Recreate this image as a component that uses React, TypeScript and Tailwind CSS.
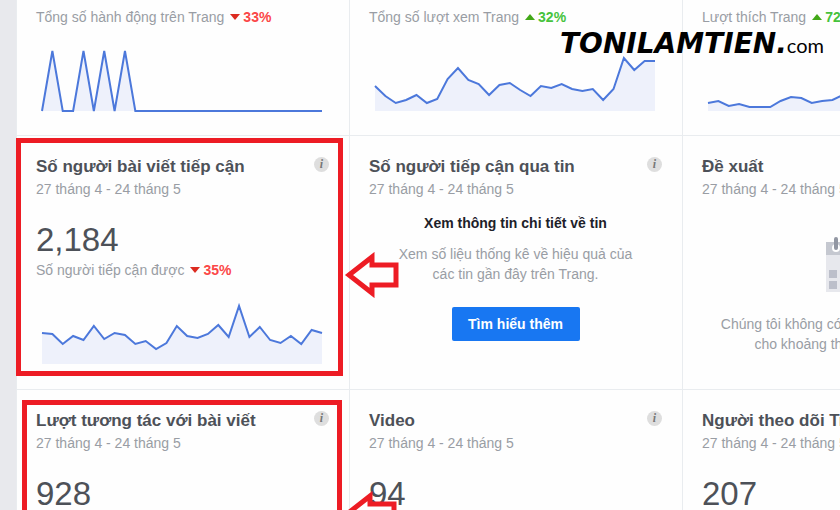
import type { ReactNode } from "react"

const PERIOD = "27 tháng 4 - 24 tháng 5"

const actions = [0, 60, 0, 0, 60, 0, 60, 0, 60, 0, 0, 0, 0, 0, 0, 0, 0, 0, 0, 0, 0, 0, 0, 0, 0, 0, 0, 0]
const views = [25, 15, 8, 11, 16, 8, 12, 32, 43, 31, 27, 16, 26, 28, 21, 15, 25, 23, 27, 22, 20, 22, 11, 22, 53, 41, 50, 50]
const likes = [8, 10, 5, 7, 4, 4, 4, 10, 14, 13, 8, 10, 11, 16, 12, 9, 14, 18, 12, 10, 15, 20, 14, 11, 9, 13, 17, 12]
const reach = [31, 30, 20, 28, 24, 38, 25, 31, 29, 20, 23, 15, 21, 38, 28, 26, 30, 39, 27, 58, 27, 37, 24, 21, 28, 20, 34, 31]

function Sparkline({ data }: { data: number[] }) {
  const step = 280 / (data.length - 1)
  const points = data.map((value, i) => `${i * step},${62 - value}`).join(" ")

  return (
    <svg
      viewBox="0 0 280 62"
      preserveAspectRatio="none"
      className="mt-[22px] block h-[62px] w-full overflow-visible pr-[7px] pl-[6px]"
      aria-hidden="true"
    >
      <polygon points={`0,62 ${points} 280,62`} fill="#eef1fb" />
      <polyline points={points} fill="none" stroke="#4c78db" strokeWidth="2" vectorEffect="non-scaling-stroke" />
    </svg>
  )
}

function Trend({ label, value, up }: { label: string; value: string; up?: boolean }) {
  return (
    <p className="flex items-center text-sm leading-5 whitespace-nowrap text-[#999da4]">
      {label}
      <svg viewBox="0 0 10 6" className={up ? "mr-[3px] ml-[6px] h-[6px] w-[10px] text-[#42a818]" : "mr-[3px] ml-[6px] h-[6px] w-[10px] text-[#dc2b20]"} aria-hidden="true">
        <path d={up ? "M5 0 10 6H0Z" : "M0 0h10L5 6Z"} fill="currentColor" />
      </svg>
      <strong className={up ? "font-bold text-[#46c33c]" : "font-bold text-[#fb4747]"}>{value}</strong>
    </p>
  )
}

function Card({ title, children }: { title?: string; children?: ReactNode }) {
  return (
    <section className="relative border-b border-l border-[#e9ecef] pr-5 pl-[19px]">
      {title && (
        <header className="flex items-start justify-between pt-[19px]">
          <div className="whitespace-nowrap">
            <h2 className="text-[17px] leading-6 font-bold text-[#4d5158]">{title}</h2>
            <p className="text-sm leading-5 text-[#999da4]">{PERIOD}</p>
          </div>
          <button
            type="button"
            aria-label={`Thông tin: ${title}`}
            className="mt-[2px] size-[15px] shrink-0 rounded-full bg-[#dedede] text-center font-['Liberation_Serif',serif] text-xs leading-[15px] font-bold text-[#777777] italic"
          >
            i
          </button>
        </header>
      )}
      {children}
    </section>
  )
}

function Total({ children }: { children: ReactNode }) {
  return <p className="mt-[21px] text-[33px] leading-10 text-[#4d5158]">{children}</p>
}

function Arrow({ className }: { className: string }) {
  return (
    <svg viewBox="0 0 56 46" className={className} aria-hidden="true">
      <path d="M5 23 28 5v8h24v20H28v8Z" fill="none" stroke="#ed1c24" strokeWidth="5" />
    </svg>
  )
}

function CalendarIcon() {
  return (
    <svg viewBox="0 0 46 56" className="h-14 w-[46px]" aria-hidden="true">
      <path d="M0 5h46v13H0z" fill="#c5c8d0" />
      <path d="M0 18h46v37H0z" fill="#e7e8ed" />
      <g fill="#fff">
        <circle cx="10" cy="11" r="4" />
        <circle cx="36" cy="11" r="4" />
      </g>
      <path d="M10 2v9M36 2v9" stroke="#9297a3" strokeWidth="4" strokeLinecap="round" />
      <path
        d="M14 22h8v8h-8zM25 22h8v8h-8zM36 22h7v8h-7zM3 33h8v8H3zM14 33h8v8h-8zM25 33h8v8h-8zM36 33h7v8h-7zM3 44h8v8H3zM14 44h8v8h-8zM25 44h8v8h-8z"
        fill="#bcbfca"
      />
    </svg>
  )
}

export default function App() {
  return (
    <main className="relative h-screen overflow-hidden bg-[#e8e9ed] pl-4 font-['Liberation_Sans',Arial,sans-serif]">
      <div className="grid min-h-full grid-cols-[repeat(3,minmax(333px,1fr))] grid-rows-[136px_254px_254px] bg-[#fefefe]">
        <Card>
          <div className="pt-[7px]">
            <Trend label="Tổng số hành động trên Trang" value="33%" />
            <Sparkline data={actions} />
          </div>
        </Card>
        <Card>
          <div className="pt-[7px]">
            <Trend label="Tổng số lượt xem Trang" value="32%" up />
            <Sparkline data={views} />
          </div>
        </Card>
        <Card>
          <div className="pt-[7px]">
            <Trend label="Lượt thích Trang" value="72%" up />
            <Sparkline data={likes} />
          </div>
        </Card>

        <Card title="Số người bài viết tiếp cận">
          <Total>2,184</Total>
          <Trend label="Số người tiếp cận được" value="35%" />
          <Sparkline data={reach} />
          <div className="pointer-events-none absolute top-[2px] right-[6px] bottom-[13px] -left-px border-[5px] border-[#ed1c24]" />
          <Arrow className="absolute top-[116px] -right-[51px] z-10 h-[46px] w-14" />
        </Card>
        <Card title="Số người tiếp cận qua tin">
          <div className="mt-[14px] flex flex-col items-center text-center text-sm leading-5">
            <h3 className="font-bold text-[#1d2129]">Xem thông tin chi tiết về tin</h3>
            <p className="mt-[11px] max-w-64 text-[#999da4]">Xem số liệu thống kê về hiệu quả của các tin gần đây trên Trang.</p>
            <button type="button" className="mt-[23px] h-[34px] w-32 rounded-xs bg-[#1877f2] font-bold text-white">
              Tìm hiểu thêm
            </button>
          </div>
        </Card>
        <Card title="Đề xuất">
          <div className="mt-[38px] flex flex-col items-center text-center text-sm leading-5 text-[#999da4]">
            <CalendarIcon />
            <p className="mt-[21px] whitespace-nowrap">
              Chúng tôi không có đủ dữ liệu để hiển thị
              <br />
              cho khoảng thời gian đã chọn.
            </p>
          </div>
        </Card>

        <Card title="Lượt tương tác với bài viết">
          <Total>928</Total>
          <div className="pointer-events-none absolute top-[10px] right-[7px] bottom-3 left-[5px] border-[5px] border-[#ed1c24]" />
          <Arrow className="absolute top-[101px] -right-[49px] z-10 h-[46px] w-14" />
        </Card>
        <Card title="Video">
          <Total>94</Total>
        </Card>
        <Card title="Người theo dõi Trang">
          <Total>207</Total>
        </Card>
      </div>

      <a href="#" className="absolute top-7 right-4 flex items-baseline leading-8 text-black">
        <span className="font-['DejaVu_Sans',sans-serif] text-[28px] font-bold italic">TONILAMTIEN.</span>
        <span className="font-['Lato',sans-serif] text-xl">com</span>
      </a>
    </main>
  )
}
